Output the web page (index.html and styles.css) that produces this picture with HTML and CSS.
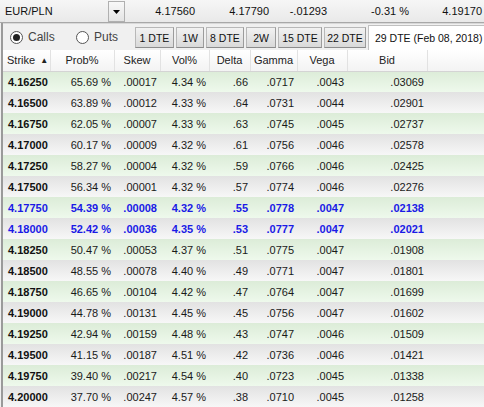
FILE: index.html
```html
<!DOCTYPE html>
<html>
<head>
<meta charset="utf-8">
<link rel="stylesheet" href="styles.css">
</head>
<body>
<div class="app">
  <div class="topbar">
    <div class="combo">
      <span class="combo-text">EUR/PLN</span>
      <span class="combo-btn"><svg width="7" height="4" viewBox="0 0 7 4"><path d="M0 0h7L3.5 4z" fill="#000"/></svg></span>
    </div>
    <span class="q q1">4.17560</span>
    <span class="q q2">4.17790</span>
    <span class="q q3">-.01293</span>
    <span class="q q4">-0.31 %</span>
    <span class="q q5">4.19170</span>
  </div>
  <div class="main">
    <div class="toolbar">
      <label class="radio"><span class="circle on"><span class="dot"></span></span>Calls</label>
      <label class="radio puts"><span class="circle"></span>Puts</label>
      <div class="tabs">
        <span class="tab t1">1 DTE</span>
        <span class="tab t2">1W</span>
        <span class="tab t3">8 DTE</span>
        <span class="tab t4">2W</span>
        <span class="tab t5">15 DTE</span>
        <span class="tab t6">22 DTE</span>
        <span class="tab sel">29 DTE (Feb 08, 2018)</span>
      </div>
    </div>
    <table class="grid">
      <colgroup>
        <col class="c-strike"><col class="c-prob"><col class="c-skew"><col class="c-vol"><col class="c-delta"><col class="c-gamma"><col class="c-vega"><col class="c-bid"><col class="c-rest">
      </colgroup>
      <thead>
        <tr><th class="h-strike">Strike <span class="arrow">▲</span></th><th>Prob%</th><th>Skew</th><th>Vol%</th><th>Delta</th><th>Gamma</th><th>Vega</th><th>Bid</th><th class="h-rest"></th></tr>
      </thead>
      <tbody>
        <tr><td>4.16250</td><td>65.69 %</td><td>.00017</td><td>4.34 %</td><td class="d">.66</td><td>.0717</td><td>.0043</td><td>.03069</td><td></td></tr>
        <tr><td>4.16500</td><td>63.89 %</td><td>.00012</td><td>4.33 %</td><td class="d">.64</td><td>.0731</td><td>.0044</td><td>.02901</td><td></td></tr>
        <tr><td>4.16750</td><td>62.05 %</td><td>.00007</td><td>4.33 %</td><td class="d">.63</td><td>.0745</td><td>.0045</td><td>.02737</td><td></td></tr>
        <tr><td>4.17000</td><td>60.17 %</td><td>.00009</td><td>4.32 %</td><td class="d">.61</td><td>.0756</td><td>.0046</td><td>.02578</td><td></td></tr>
        <tr><td>4.17250</td><td>58.27 %</td><td>.00004</td><td>4.32 %</td><td class="d">.59</td><td>.0766</td><td>.0046</td><td>.02425</td><td></td></tr>
        <tr><td>4.17500</td><td>56.34 %</td><td>.00001</td><td>4.32 %</td><td class="d">.57</td><td>.0774</td><td>.0046</td><td>.02276</td><td></td></tr>
        <tr class="atm"><td>4.17750</td><td>54.39 %</td><td>.00008</td><td>4.32 %</td><td class="d">.55</td><td>.0778</td><td>.0047</td><td>.02138</td><td></td></tr>
        <tr class="atm"><td>4.18000</td><td>52.42 %</td><td>.00036</td><td>4.35 %</td><td class="d">.53</td><td>.0777</td><td>.0047</td><td>.02021</td><td></td></tr>
        <tr><td>4.18250</td><td>50.47 %</td><td>.00053</td><td>4.37 %</td><td class="d">.51</td><td>.0775</td><td>.0047</td><td>.01908</td><td></td></tr>
        <tr><td>4.18500</td><td>48.55 %</td><td>.00078</td><td>4.40 %</td><td class="d">.49</td><td>.0771</td><td>.0047</td><td>.01801</td><td></td></tr>
        <tr><td>4.18750</td><td>46.65 %</td><td>.00104</td><td>4.42 %</td><td class="d">.47</td><td>.0764</td><td>.0047</td><td>.01699</td><td></td></tr>
        <tr><td>4.19000</td><td>44.78 %</td><td>.00131</td><td>4.45 %</td><td class="d">.45</td><td>.0756</td><td>.0047</td><td>.01602</td><td></td></tr>
        <tr><td>4.19250</td><td>42.94 %</td><td>.00159</td><td>4.48 %</td><td class="d">.43</td><td>.0747</td><td>.0046</td><td>.01509</td><td></td></tr>
        <tr><td>4.19500</td><td>41.15 %</td><td>.00187</td><td>4.51 %</td><td class="d">.42</td><td>.0736</td><td>.0046</td><td>.01421</td><td></td></tr>
        <tr><td>4.19750</td><td>39.40 %</td><td>.00217</td><td>4.54 %</td><td class="d">.40</td><td>.0723</td><td>.0045</td><td>.01338</td><td></td></tr>
        <tr><td>4.20000</td><td>37.70 %</td><td>.00247</td><td>4.57 %</td><td class="d">.38</td><td>.0710</td><td>.0045</td><td>.01258</td><td></td></tr>
      </tbody>
    </table>
  </div>
</div>
</body>
</html>
```
FILE: styles.css
```css
html, body {
  margin: 0;
  padding: 0;
  background: #f0f0f0;
}
body {
  font-family: "Liberation Sans", Arial, sans-serif;
  font-size: 11px;
  color: #1a1a1a;
  width: 484px;
  height: 407px;
  overflow: hidden;
}
.app {
  width: 484px;
  height: 407px;
  overflow: hidden;
}
.topbar {
  height: 23px;
  display: flex;
  align-items: center;
  border-bottom: 1px solid #a8a8a8;
  background: linear-gradient(#f6f6f6, #e9e9e9);
  box-sizing: border-box;
}
.combo {
  width: 125px;
  height: 22px;
  display: flex;
  align-items: stretch;
  flex: none;
  box-sizing: border-box;
}
.combo-text {
  flex: 1;
  padding-left: 5px;
  display: flex;
  align-items: center;
  font-size: 11px;
  color: #111;
}
.combo-btn {
  width: 17px;
  margin: 1px 0 0;
  border: 1px solid #b0b0b0;
  background: linear-gradient(#f8f8f8, #e4e4e4);
  display: flex;
  align-items: center;
  justify-content: center;
  box-sizing: border-box;
}
.q {
  flex: none;
  text-align: right;
  font-size: 11px;
  color: #111;
  white-space: nowrap;
}
.q1 { width: 70px; }
.q2 { width: 74px; }
.q3 { width: 58px; }
.q4 { width: 82px; }
.q5 { width: 73px; }
.main {
  border-left: 2px solid #9a9a9a;
  margin-left: 1px;
  height: 384px;
  overflow: hidden;
}
.toolbar {
  height: 27px;
  display: flex;
  align-items: stretch;
  background: #f0f0f0;
  border-top: 1px solid #d8d8d8;
  box-sizing: border-box;
}
.radio {
  display: flex;
  align-items: center;
  font-size: 12px;
  color: #444;
  padding-left: 7px;
  width: 70px;
  box-sizing: border-box;
  flex: none;
}
.radio.puts {
  padding-left: 3px;
  width: 50px;
}
.circle {
  width: 11px;
  height: 11px;
  border: 1px solid #555;
  border-radius: 50%;
  background: #fff;
  margin-right: 5px;
  display: flex;
  align-items: center;
  justify-content: center;
}
.dot {
  width: 7px;
  height: 7px;
  border-radius: 50%;
  background: #222;
}
.tabs {
  display: flex;
  align-items: flex-end;
  margin-left: 12px;
  gap: 2px;
  flex: 1;
  min-width: 0;
}
.tab {
  height: 21px;
  margin-bottom: 2px;
  display: flex;
  align-items: center;
  justify-content: center;
  background: linear-gradient(#f2f2f2, #d9d9d9);
  border: 1px solid #b8b8b8;
  border-right-color: #9c9c9c;
  border-bottom-color: #8c8c8c;
  box-sizing: border-box;
  font-size: 10.5px;
  color: #111;
  white-space: nowrap;
  flex: none;
}
.t1 { width: 39px; }
.t2 { width: 28px; }
.t3 { width: 38px; }
.t4 { width: 30px; }
.t5 { width: 44px; }
.t6 { width: 42px; }
.tab.sel {
  height: 25px;
  margin-bottom: 0;
  flex: 1;
  min-width: 0;
  background: #fff;
  border: 1px solid #c0c0c0;
  border-bottom: none;
  justify-content: flex-start;
  padding-left: 6px;
  font-size: 10.5px;
  margin-right: -2px;
}
.grid {
  border-collapse: collapse;
  table-layout: fixed;
  width: 481px;
}
.c-strike { width: 47px; }
.c-prob { width: 64px; }
.c-skew { width: 46px; }
.c-vol { width: 49px; }
.c-delta { width: 41px; }
.c-gamma { width: 47px; }
.c-vega { width: 50px; }
.c-bid { width: 80px; }
.c-rest { width: 57px; }
thead tr {
  height: 21px;
  background: linear-gradient(#ffffff, #f3f3f3);
}
th {
  font-weight: normal;
  font-size: 11px;
  color: #222;
  text-align: center;
  padding: 0;
  border-right: 1px solid #e2e2e2;
  border-bottom: 1px solid #d4d4d4;
  white-space: nowrap;
}
th.h-strike {
  text-align: left;
  padding-left: 4px;
}
th.h-rest {
  border-right: none;
}
.arrow {
  font-size: 8px;
  vertical-align: 1px;
  margin-left: 2px;
}
tbody tr {
  height: 21px;
}
tbody tr:nth-child(odd) {
  background: linear-gradient(#dcecd8, #eef9ec);
}
tbody tr:nth-child(even) {
  background: linear-gradient(#e2e2e2, #f7f7f7);
}
td {
  padding: 0 3px 0 0;
  text-align: right;
  font-size: 11px;
  white-space: nowrap;
  color: #1a1a1a;
}
td:first-child {
  text-align: left;
  padding-left: 5px;
  font-weight: bold;
  color: #111;
}
td.d {
  padding-right: 2px;
}
tr.atm td {
  color: #1a1ae6;
  font-weight: bold;
}
```
